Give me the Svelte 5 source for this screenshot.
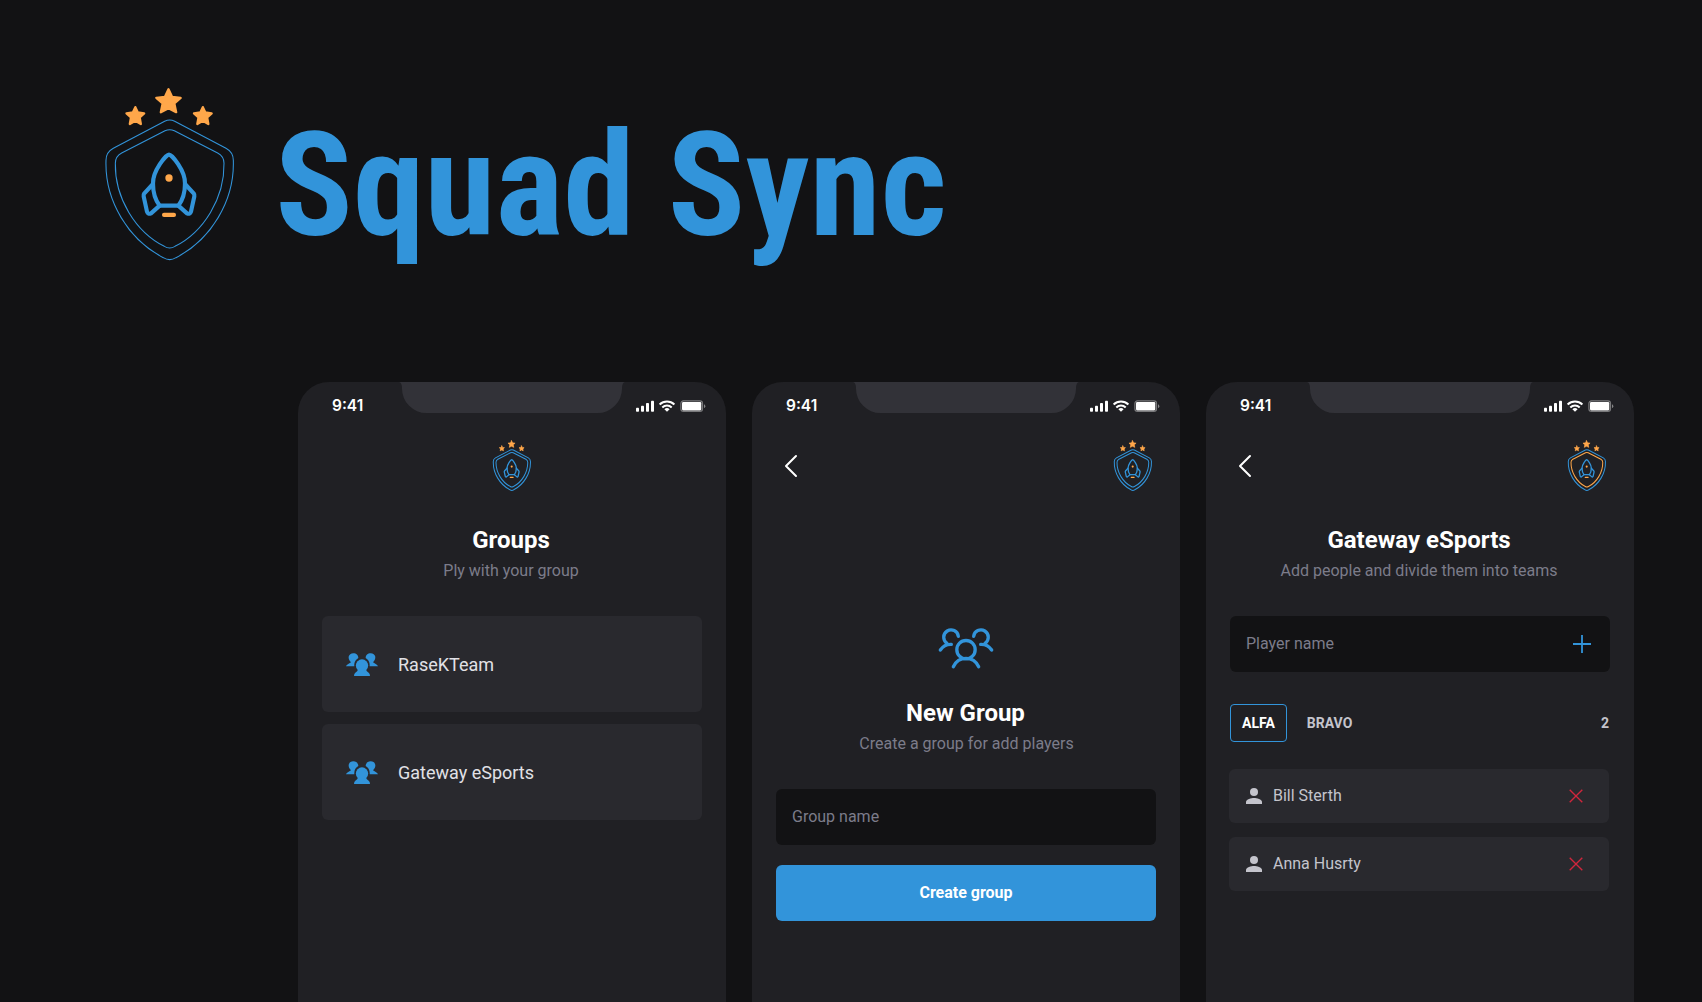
<script>
  const groups = ['RaseKTeam', 'Gateway eSports'];
  const players = ['Bill Sterth', 'Anna Husrty'];
</script>

{#snippet logo(variant)}
  <svg class="logo {variant}" viewBox="45 52 388 520" fill="none" stroke-linejoin="round" stroke-linecap="round">
    <g class="star">
      <path d="M235.500 59L246 81.500L272 84.500L253 101.500L258.500 127.500L235.500 115.500L212.500 127.500L218 101.500L199 84.500L225 81.500Z" />
      <path d="M136 112.500L143.500 128.500L162.500 131L149 143.500L152.500 163L136 153.500L119.500 163L123 143.500L109.500 131L128.500 128.500Z" />
      <path d="M338.500 112.500L346 128.500L365 131L351.500 143.500L355 163L338.500 153.500L322 163L325.500 143.500L312 131L331 128.500Z" />
    </g>
    <path class="shield" d="M224 154.500Q239 148 254 154.500L408 236Q430 248 430 272C434 395 362 510 258 564Q239 576 220 564C116 510 44 395 48 272Q48 248 70 236Z" />
    <path class="shield inner" d="M225 183Q239 177 253 183L383 250Q402 260 402 281C404 385 341 487 255 530Q239 540 223 530C137 487 74 385 76 281Q76 260 95 250Z" />
    <g class="rocket">
      <path d="M237 255C229 255 188 302 189 342C189 368 196 391 209 408H265C278 391 285 368 285 342C286 302 245 255 237 255Z" />
      <path d="M189 343L163 371Q160 375 161 380L171 426Q174 435 183 431L209 408" />
      <path d="M285 343L311 371Q314 375 313 380L303 426Q300 435 291 431L265 408" />
    </g>
    <circle class="spark" cx="237" cy="325" r="11" />
    <rect class="spark" x="216" y="429" width="42" height="13" rx="6" />
  </svg>
{/snippet}

{#snippet statusBar()}
  <div class="status">
    <span class="time">9:41</span>
    <svg class="notch" width="226" height="31" viewBox="0 0 226 31">
      <path d="M0 0H226Q223 .5 223 6.500A24.500 24.500 0 0 1 198.500 31H27.500A24.500 24.500 0 0 1 3 6.500Q3 .5 0 0Z" fill="#323238" />
    </svg>
    <svg class="signals" width="70" height="13" viewBox="0 0 70 13" fill="#fff">
      <rect x="0" y="7.700" width="3" height="4" rx=".8" />
      <rect x="5" y="5.700" width="3" height="6" rx=".8" />
      <rect x="10" y="3" width="3" height="8.700" rx=".8" />
      <rect x="15" y=".7" width="3" height="11" rx=".8" />
      <g fill="none" stroke="#fff" stroke-width="2">
        <path d="M23.600 4.500A10.800 10.800 0 0 1 38.400 4.500" />
        <path d="M26.300 7.500A6.800 6.800 0 0 1 35.700 7.500" />
      </g>
      <path d="M28.400 9.200A3.900 3.900 0 0 1 33.600 9.200L31 11.800Z" />
      <rect x="44.900" y=".8" width="21.600" height="10.600" rx="2.600" fill="none" stroke="#fff" stroke-opacity=".4" stroke-width="1.200" />
      <rect x="46" y="2" width="19.300" height="8.400" rx="1.300" />
      <path d="M68 4.300Q69.300 4.800 69.300 6.200Q69.300 7.600 68 8.100Z" fill-opacity=".45" />
    </svg>
  </div>
{/snippet}

{#snippet back()}
  <svg class="back" width="14" height="24" viewBox="0 0 14 24"><path d="M12 2L2 12L12 22" /></svg>
{/snippet}

<main>
  <header class="brand">
    {@render logo('large')}
    <h1>Squad Sync</h1>
  </header>

  <div class="screens">
    <section class="screen">
      {@render statusBar()}
      <div class="bar centered">{@render logo('small')}</div>
      <h2>Groups</h2>
      <p>Ply with your group</p>
      <div class="groups">
        {#each groups as name}
          <div class="group">
            <svg width="32" height="23" viewBox="138 159 96 69" fill="#3294da">
              <path d="M153 187C141 176 145 160 160 160C169 160 175 166 175 174C167 179 162 186 163 199H138C139 194 147 192 153 187Z" />
              <path d="M219 187C231 176 227 160 212 160C203 160 197 166 197 174C205 179 210 186 209 199H234C233 194 225 192 219 187Z" />
              <circle cx="186" cy="196.500" r="18.500" />
              <path d="M174 207H198Q198 214 206 218Q210 221 210 228H162Q162 221 166 218Q174 214 174 207Z" />
            </svg>
            <span>{name}</span>
          </div>
        {/each}
      </div>
    </section>

    <section class="screen">
      {@render statusBar()}
      <div class="bar">{@render back()}{@render logo('small')}</div>
      <svg class="team" width="54" height="40" viewBox="567 84 162 120">
        <circle cx="648" cy="149" r="27.500" />
        <path d="M610 200C626 167 670 167 686 200" />
        <path d="M625 109A22 22 0 1 0 591 130M604 133Q583 132 571 150" />
        <path d="M671 109A22 22 0 1 1 705 130M692 133Q713 132 725 150" />
      </svg>
      <h2>New Group</h2>
      <p class="wide">Create a group for add players</p>
      <div class="field">Group name</div>
      <button>Create group</button>
    </section>

    <section class="screen">
      {@render statusBar()}
      <div class="bar">{@render back()}{@render logo('small gold')}</div>
      <h2>Gateway eSports</h2>
      <p>Add people and divide them into teams</p>
      <div class="field">
        Player name
        <svg width="18" height="20" viewBox="0 0 18 20"><path d="M9 2V20M0 11H18" stroke="#3294da" stroke-width="1.800" /></svg>
      </div>
      <div class="tabs">
        <span class="tab active">ALFA</span>
        <span class="tab">BRAVO</span>
        <span class="count">2</span>
      </div>
      <div class="players">
        {#each players as name}
          <div class="player">
            <svg width="16" height="16" viewBox="0 0 16 16" fill="#c4c4cc">
              <circle cx="8" cy="4" r="4" />
              <path d="M0 16V14C0 11.300 5.300 10 8 10S16 11.300 16 14V16Z" />
            </svg>
            <span>{name}</span>
            <svg width="14" height="14" viewBox="0 0 14 14"><path d="M.7 .7L13.300 13.300M13.300 .7L.7 13.300" stroke="#d0263c" stroke-width="1.350" /></svg>
          </div>
        {/each}
      </div>
    </section>
  </div>
</main>

<style>
  :global(body) {
    background: #121214;
  }
  main {
    box-sizing: border-box;
    width: 1702px;
    height: 1002px;
    overflow: hidden;
    background: #121214;
    font-family: Roboto, sans-serif;
    color: #fff;
  }
  svg {
    display: block;
    flex: none;
  }
  .brand {
    display: flex;
    align-items: flex-start;
    height: 295px;
    padding: 87px 0 0 105px;
  }
  h1 {
    margin: 15px 0 0 41px;
    font-family: 'Roboto Condensed', Roboto, sans-serif;
    font-stretch: 75%;
    font-size: 144px;
    line-height: 168px;
    font-weight: 700;
    color: #3294da;
    white-space: nowrap;
  }
  .logo {
    width: 37.750px;
    height: 50.600px;
    overflow: visible;
  }
  .logo.large {
    width: 129.330px;
    height: 173.330px;
  }
  .star {
    fill: #ffa74a;
    stroke: #ffa74a;
    stroke-width: 7;
  }
  .shield {
    stroke: #3294da;
    stroke-width: 3.200;
  }
  .small .shield {
    stroke-width: 10.300;
  }
  .gold .inner {
    stroke: #ffa74a;
  }
  .rocket {
    stroke: #3294da;
    stroke-width: 12.500;
  }
  .small .rocket {
    stroke-width: 13.500;
  }
  .spark {
    fill: #ffa74a;
  }
  .screens {
    display: flex;
    gap: 26px;
    padding-left: 298px;
  }
  .screen {
    box-sizing: border-box;
    display: flex;
    flex-direction: column;
    width: 428px;
    height: 620px;
    padding: 0 24px;
    border-radius: 31px 31px 0 0;
    background: #202024;
  }
  .status {
    display: flex;
    justify-content: space-between;
    align-items: flex-start;
    height: 58px;
    margin: 0 -4px 0 10px;
  }
  .time {
    width: 56px;
    padding-top: 14px;
    font: 600 15.500px/20px Inter, sans-serif;
  }
  .signals {
    margin-top: 18px;
  }
  .bar {
    display: flex;
    align-items: center;
    justify-content: space-between;
    height: 51px;
    padding: 0 4px 0 8px;
  }
  .bar.centered {
    justify-content: center;
    padding: 0 0 0 .25px;
  }
  .back path {
    fill: none;
    stroke: #fff;
    stroke-width: 2;
    stroke-linecap: round;
    stroke-linejoin: round;
  }
  h2 {
    margin: 32px 0 0;
    padding-right: 2px;
    font-size: 24px;
    line-height: 34px;
    font-weight: 700;
    text-align: center;
  }
  p {
    margin: 3px 0 34px;
    padding-right: 2px;
    font-size: 16px;
    line-height: 22px;
    text-align: center;
    color: #7c7c8a;
  }
  p.wide {
    padding: 0 0 0 1px;
  }
  .groups {
    display: grid;
    gap: 12px;
  }
  .group {
    display: flex;
    align-items: center;
    gap: 20px;
    height: 96px;
    padding-left: 24px;
    border-radius: 6px;
    background: #29292e;
    font-size: 18px;
    color: #e1e1e6;
  }
  .team {
    align-self: center;
    margin-top: 137px;
    fill: none;
    stroke: #3294da;
    stroke-width: 10;
    stroke-linecap: round;
    overflow: visible;
  }
  .team + h2 {
    margin-top: 28px;
    padding-right: 1px;
  }
  .field {
    box-sizing: border-box;
    display: flex;
    align-items: center;
    justify-content: space-between;
    height: 56px;
    padding: 0 19px 2px 16px;
    border-radius: 6px;
    background: #121214;
    font-size: 16px;
    color: #7c7c8a;
  }
  button {
    height: 56px;
    margin-top: 20px;
    padding: 0 0 2px;
    border: 0;
    border-radius: 6px;
    background: #3294da;
    color: #fff;
    font: 700 16px Roboto, sans-serif;
  }
  .tabs {
    display: flex;
    align-items: center;
    margin: 32px 0 27px;
    font-size: 14px;
    font-weight: 700;
    color: #c4c4cc;
  }
  .tab {
    box-sizing: border-box;
    height: 38px;
    margin-right: 8px;
    padding: 0 11px;
    border: 1px solid transparent;
    border-radius: 4px;
    line-height: 36px;
  }
  .tab.active {
    border-color: #3294da;
    color: #fff;
  }
  .count {
    margin: 0 1px 0 auto;
  }
  .players {
    display: grid;
    gap: 14px;
    margin: 0 1px 0 -1px;
  }
  .player {
    display: flex;
    align-items: center;
    gap: 11px;
    height: 54px;
    padding: 0 26px 0 17px;
    border-radius: 6px;
    background: #29292e;
    font-size: 16px;
    color: #c4c4cc;
  }
  .player span {
    flex: 1;
    padding-bottom: 1px;
  }
</style>
